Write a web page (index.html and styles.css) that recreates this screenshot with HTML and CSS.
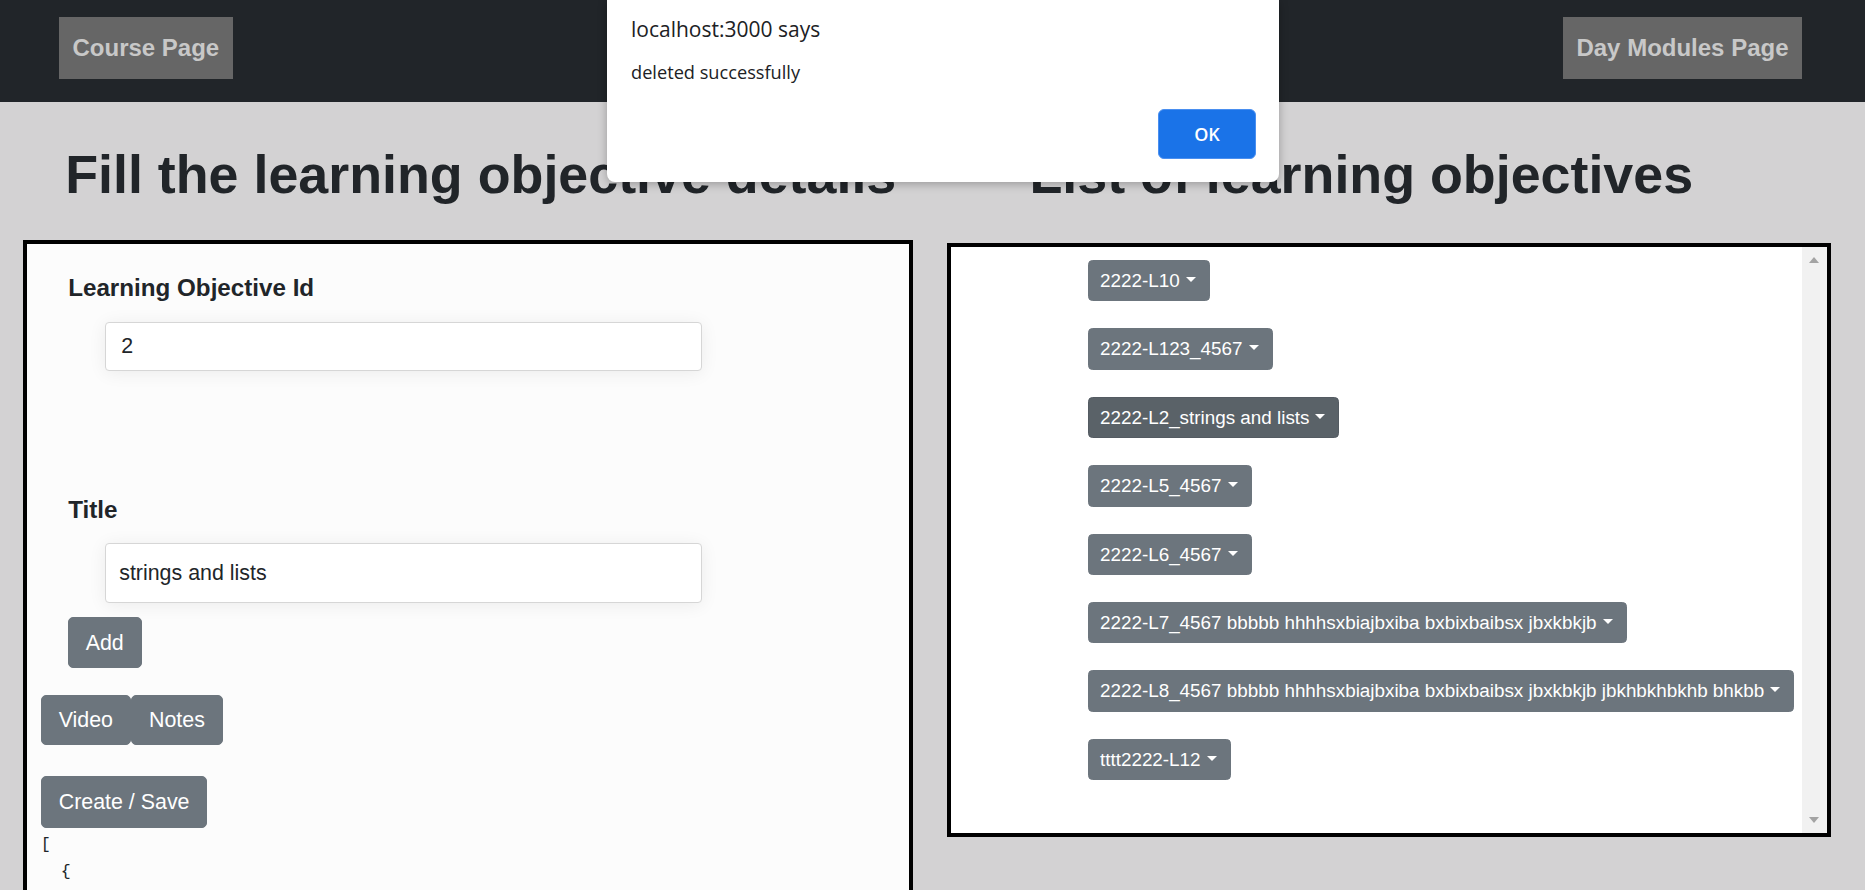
FILE: index.html
```html
<!DOCTYPE html>
<html lang="en">
<head>
<meta charset="utf-8">
<title>Learning Objectives</title>
<link rel="stylesheet" href="styles.css">
</head>
<body>
<nav class="navbar">
  <a class="nav-btn" href="#">Course Page</a>
  <a class="nav-btn" href="#">Day Modules Page</a>
</nav>
<main class="content">
  <section class="col">
    <h1 class="col-title title-form">Fill the learning objective details</h1>
    <div class="panel panel-form">
      <div class="field">
        <label class="field-label">Learning Objective Id</label>
        <input class="field-input field-input-id" type="text" value="2">
      </div>
      <div class="field field-title">
        <label class="field-label">Title</label>
        <input class="field-input field-input-title" type="text" value="strings and lists">
      </div>
      <button class="btn btn-add">Add</button>
      <div class="btn-pair">
        <button class="btn btn-tab">Video</button>
        <button class="btn btn-tab">Notes</button>
      </div>
      <button class="btn btn-save">Create / Save</button>
<pre class="json">[
  {</pre>
    </div>
  </section>
  <section class="col">
    <h1 class="col-title title-list">List of learning objectives</h1>
    <div class="panel panel-list">
      <ul class="lo-list">
        <li><button class="btn btn-dd">2222-L10<span class="caret"></span></button></li>
        <li><button class="btn btn-dd">2222-L123_4567<span class="caret"></span></button></li>
        <li><button class="btn btn-dd btn-dd-active">2222-L2_strings and lists<span class="caret"></span></button></li>
        <li><button class="btn btn-dd">2222-L5_4567<span class="caret"></span></button></li>
        <li><button class="btn btn-dd">2222-L6_4567<span class="caret"></span></button></li>
        <li><button class="btn btn-dd">2222-L7_4567 bbbbb hhhhsxbiajbxiba bxbixbaibsx jbxkbkjb<span class="caret"></span></button></li>
        <li><button class="btn btn-dd">2222-L8_4567 bbbbb hhhhsxbiajbxiba bxbixbaibsx jbxkbkjb jbkhbkhbkhb bhkbb<span class="caret"></span></button></li>
        <li><button class="btn btn-dd">tttt2222-L12<span class="caret"></span></button></li>
      </ul>
      <div class="fake-scroll">
        <span class="arrow-up"></span>
        <span class="arrow-down"></span>
      </div>
    </div>
  </section>
</main>
<div class="alert-dialog">
  <p class="alert-title">localhost:3000 says</p>
  <p class="alert-msg">deleted successfully</p>
  <div class="alert-actions">
    <button class="alert-ok">OK</button>
  </div>
</div>
</body>
</html>
```
FILE: styles.css
```css
html, body {
  overflow: hidden;
}
body {
  margin: 0;
  background: #d3d2d3;
  font-family: "Liberation Sans", Arial, sans-serif;
  color: #212529;
}

/* navbar */
.navbar {
  display: flex;
  justify-content: space-between;
  align-items: flex-start;
  height: 102px;
  box-sizing: border-box;
  padding: 17px 63px 0 59px;
  background: #212529;
}
.nav-btn {
  display: block;
  height: 62px;
  line-height: 62px;
  padding: 0 13.5px;
  background: #666666;
  color: #c8c8c8;
  font-weight: bold;
  font-size: 24px;
  text-decoration: none;
}

/* columns */
.content {
  display: flex;
  align-items: flex-start;
  gap: 33.8px;
  padding: 39.5px 0 0 22.7px;
}
.col-title {
  margin: 0;
  font-size: 53.8px;
  line-height: 64.8px;
  font-weight: bold;
  white-space: nowrap;
}
.title-form {
  padding-left: 42.5px;
  margin-bottom: 33.7px;
}
.title-list {
  padding-left: 82.5px;
  margin-bottom: 37px;
}
.panel {
  border: 4px solid #000;
  box-sizing: border-box;
}
.panel-form {
  width: 890.5px;
  min-height: 720px;
  background: #fcfcfc;
  padding-top: 30.5px;
}
.panel-list {
  width: 884px;
  height: 593.4px;
  background: #ffffff;
  display: flex;
}

/* form */
.field-label {
  display: block;
  margin-left: 41.5px;
  font-size: 24.2px;
  line-height: 28.8px;
  font-weight: bold;
}
.field-input {
  display: block;
  box-sizing: border-box;
  margin-left: 78.5px;
  width: 597px;
  border: 1px solid #d6d6d6;
  border-radius: 4px;
  background: #ffffff;
  font-family: "Liberation Sans", Arial, sans-serif;
  font-size: 21.4px;
  color: #212529;
  box-shadow: 0 2px 18px rgba(0, 0, 0, 0.07);
  outline: none;
}
.field-input-id {
  margin-top: 18.5px;
  height: 49.5px;
  padding: 0 15px;
}
.field-title {
  margin-top: 125.2px;
}
.field-input-title {
  margin-top: 18px;
  height: 60px;
  padding: 0 13px;
}

.btn {
  display: block;
  font-family: "Liberation Sans", Arial, sans-serif;
  font-size: 21.4px;
  line-height: 32.1px;
  color: #ffffff;
  background: #6c757d;
  border: 1px solid #6c757d;
  border-radius: 5px;
  padding: 8.5px 17px;
  cursor: pointer;
}
.btn-add {
  margin: 14px 0 0 41px;
}
.btn-pair {
  display: flex;
  gap: 0;
  margin: 26.5px 0 0 14px;
}
.btn-tab {
  padding: 8px 17px;
}
.btn-save {
  margin: 31.5px 0 0 14px;
}
.json {
  margin: 3px 0 0 14px;
  font-family: "Liberation Mono", "DejaVu Sans Mono", monospace;
  font-size: 16.7px;
  line-height: 27px;
  color: #212529;
}

/* list */
.lo-list {
  list-style: none;
  margin: 0;
  padding: 12.8px 0 0 137px;
  flex: 1;
  display: flex;
  flex-direction: column;
  align-items: flex-start;
  gap: 27.1px;
}
.btn-dd {
  font-size: 18.85px;
  line-height: 27.3px;
  padding: 6px 13px 6px 11px;
  border-radius: 4.5px;
  white-space: nowrap;
}
.btn-dd-active {
  background: #5a6268;
  border-color: #545b62;
}
.caret {
  display: inline-block;
  width: 0;
  height: 0;
  margin-left: 6px;
  vertical-align: 5px;
  border-top: 5px solid #ffffff;
  border-left: 5px solid transparent;
  border-right: 5px solid transparent;
}
.fake-scroll {
  width: 25px;
  flex: none;
  box-sizing: border-box;
  background: #f1f1f1;
  display: flex;
  flex-direction: column;
  justify-content: space-between;
  align-items: center;
  padding: 9.7px 0 10px;
}
.arrow-up {
  width: 0;
  height: 0;
  border-left: 5px solid transparent;
  border-right: 5px solid transparent;
  border-bottom: 6px solid #a3a3a3;
}
.arrow-down {
  width: 0;
  height: 0;
  border-left: 5px solid transparent;
  border-right: 5px solid transparent;
  border-top: 6px solid #a3a3a3;
}

/* browser alert overlay */
.alert-dialog {
  position: absolute;
  top: 0;
  left: 607px;
  width: 672px;
  height: 182px;
  box-sizing: border-box;
  padding: 14.5px 23px 0 24px;
  background: #ffffff;
  border-radius: 0 0 8px 8px;
  box-shadow: 0 2px 10px rgba(0, 0, 0, 0.28);
  font-family: "Open Sans", "Noto Sans", sans-serif;
  color: #202124;
}
.alert-title {
  margin: 0;
  font-size: 21px;
  line-height: 28px;
}
.alert-msg {
  margin: 17.7px 0 0;
  font-size: 18.2px;
  line-height: 24px;
}
.alert-actions {
  margin-top: 24.8px;
  display: flex;
  justify-content: flex-end;
}
.alert-ok {
  width: 98px;
  height: 50px;
  background: #1a73e8;
  border: 1px solid #4a8ff0;
  border-radius: 6px;
  color: #ffffff;
  font-family: "Open Sans", "Noto Sans", sans-serif;
  font-weight: 600;
  font-size: 18px;
}
```
